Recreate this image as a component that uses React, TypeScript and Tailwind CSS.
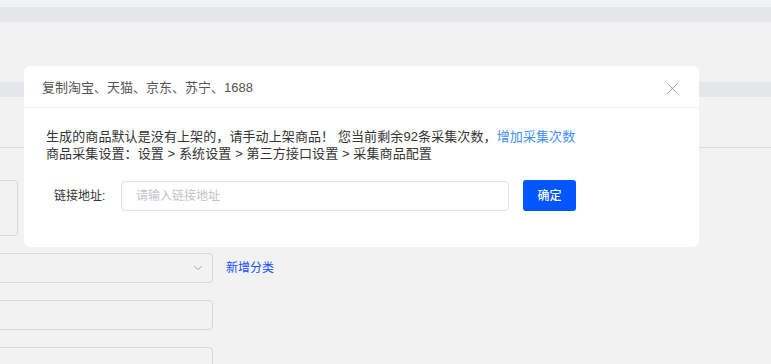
import { X, ChevronDown } from 'lucide-react';

const font = { fontFamily: '"Liberation Sans", "Noto Sans CJK SC", sans-serif' };

const Backdrop = () => (
  <div className="flex flex-col">
    <div className="h-[7px]" />
    <div className="h-[15px] bg-[#e5e6e9]" />
    <div className="h-[60px]" />
    <div className="h-[15px] bg-[#e5e6e9]" />
    <div className="h-[50px]" />
    <div className="h-px bg-[#dcdcdf]" />
    <div className="h-[32px]" />
    <div className="-ml-3 h-[56px] w-[30px] rounded border border-[#d6d6db]" />
    <div className="h-[17px]" />
    <div className="flex items-center gap-[13px]">
      <div className="-ml-3 flex h-[30px] w-[225px] items-center justify-end rounded border border-[#d6d6db] pr-[7px]">
        <ChevronDown size={14} strokeWidth={1.2} className="text-[#888]" />
      </div>
      <span className="text-[12px] text-[#1650ff]">新增分类</span>
    </div>
    <div className="h-[17px]" />
    <div className="-ml-3 h-[30px] w-[225px] rounded border border-[#d6d6db]" />
    <div className="h-[17px]" />
    <div className="-ml-3 h-[30px] w-[225px] rounded border border-[#d6d6db]" />
  </div>
);

const CollectDialog = () => (
  <div className="absolute left-[24px] top-[66px] flex h-[181px] w-[675px] flex-col rounded-[6px] bg-white">
    <div className="flex h-[42px] items-center justify-between border-b border-[#ebedf0] pl-[18px] pr-[17px] pt-[3px]">
      <span className="text-[13px] text-[#555]">复制淘宝、天猫、京东、苏宁、1688</span>
      <X size={19} strokeWidth={1.1} className="text-[#909399]" />
    </div>
    <div className="flex flex-col pl-[22px] pt-[20px]">
      <p className="text-[13px] leading-[17px] tracking-[0.1px] text-[#333]">
        生成的商品默认是没有上架的，请手动上架商品！ 您当前剩余92条采集次数，
        <span className="text-[#3f8ef5]">增加采集次数</span>
      </p>
      <p className="text-[13px] leading-[17px] tracking-[0.1px] text-[#333]">
        商品采集设置：设置 &gt; 系统设置 &gt; 第三方接口设置 &gt; 采集商品配置
      </p>
      <div className="mt-[18px] flex items-center">
        <span className="w-[75px] pl-[8px] text-[12px] text-[#333]">链接地址:</span>
        <div className="flex h-[30px] w-[388px] items-center rounded border border-[#dcdfe6] px-[14px] text-[12px] text-[#c0c4cc]">
          请输入链接地址
        </div>
        <button className="ml-[14px] flex h-[31px] w-[53px] items-center justify-center rounded-[3px] bg-[#0256ff] text-[12px] font-medium text-white">
          确定
        </button>
      </div>
    </div>
  </div>
);

export default function App() {
  return (
    <div className="relative h-[364px] w-[771px] overflow-hidden bg-[#f2f2f2]" style={font}>
      <Backdrop />
      <CollectDialog />
    </div>
  );
}
